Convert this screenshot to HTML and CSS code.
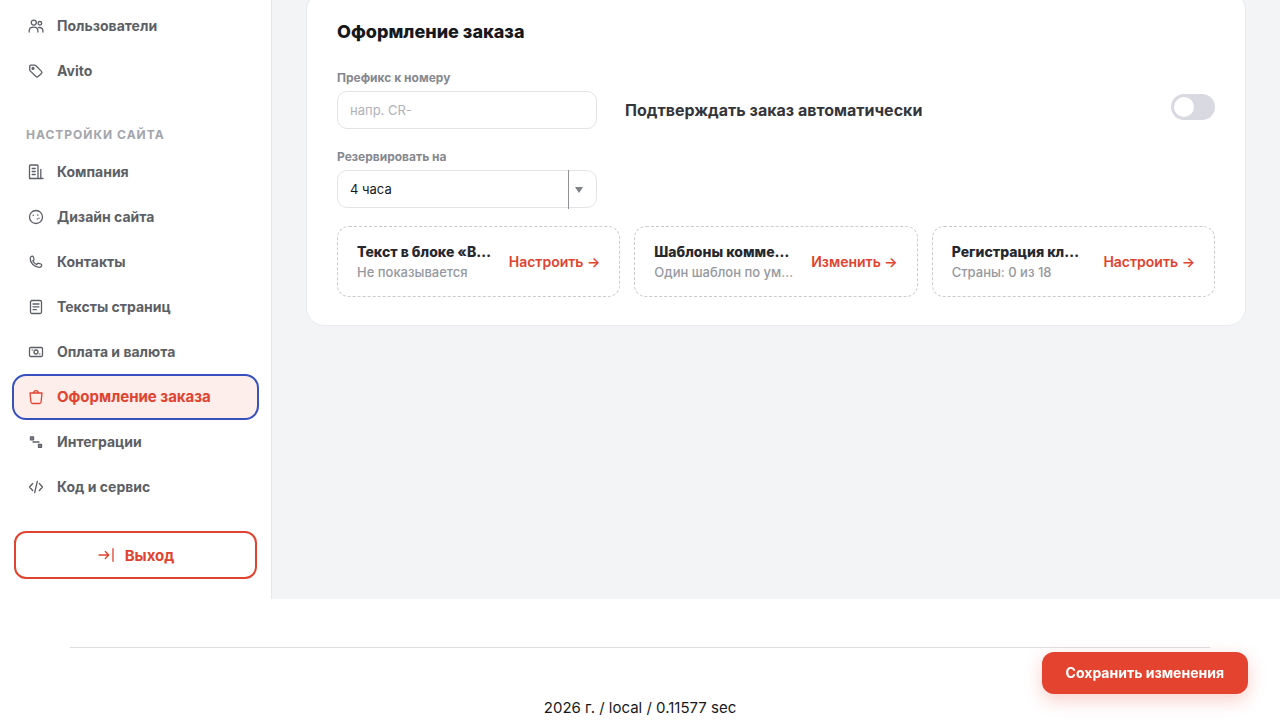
FILE: index.html
```html
<!DOCTYPE html>
<html lang="ru">
<head>
  <meta charset="UTF-8">
  <meta name="viewport" content="width=device-width, initial-scale=1">
  <title>Оформление заказа</title>
  <link rel="stylesheet" href="styles.css">
</head>
<body>
  <div class="layout">
    <aside class="sidebar">
      <nav class="menu">
        <a class="menu-item" href="#users">
          <svg class="icon" viewBox="0 0 18 18"><circle cx="6.8" cy="5.6" r="2.5"/><circle cx="12.9" cy="6.3" r="1.8"/><path d="M2.2 15v-1.2c0-2.2 1.9-3.6 4.4-3.6s4.3 1.4 4.3 3.6V15M11.6 10.6c2.4-.5 4.3.9 4.3 3V15"/></svg>
          Пользователи
        </a>
        <a class="menu-item" href="#avito">
          <svg class="icon" viewBox="0 0 18 18"><path d="M2.7 4.2v3.5c0 .5.2.9.5 1.2l5.8 5.6c.6.6 1.5.6 2.1 0l3.4-3.1c.6-.6.6-1.4 0-2L9 3.7c-.4-.3-.8-.5-1.3-.5h-4c-.6 0-1 .4-1 1z"/><circle cx="6" cy="6.4" r=".9"/></svg>
          Avito
        </a>
      </nav>

      <div class="menu-title">Настройки сайта</div>
      <nav class="menu">
        <a class="menu-item" href="#company">
          <svg class="icon" viewBox="0 0 18 18"><path d="M2.5 15.5V3c0-.6.4-1 1-1H10c.6 0 1 .4 1 1v12.5M2.5 15.5H16M13.8 6.5v9M5.2 5.5h3M5.2 8.5h3M5.2 11.5h3"/></svg>
          Компания
        </a>
        <a class="menu-item" href="#design">
          <svg class="icon" viewBox="0 0 18 18"><circle cx="9" cy="9" r="6.5"/><g class="dots"><circle cx="6.3" cy="7.2" r=".8"/><circle cx="10.7" cy="7" r=".8"/><circle cx="12" cy="10.2" r=".7"/><circle cx="10.3" cy="11" r=".7"/></g></svg>
          Дизайн сайта
        </a>
        <a class="menu-item" href="#contacts">
          <svg class="icon" viewBox="0 0 18 18"><path d="M3.2 5.2c.1-1 .8-1.9 1.8-2.1.6-.1 1.1.2 1.3.8l.7 2c.2.5 0 1-.4 1.3l-.8.6c.8 1.7 2.1 3 3.9 3.8l.7-.9c.3-.4.8-.5 1.3-.4l2.2.7c.6.2.9.7.8 1.3-.2 1.1-1.2 2-2.4 2C7.5 14.3 3 10 3.2 5.2z"/></svg>
          Контакты
        </a>
        <a class="menu-item" href="#texts">
          <svg class="icon" viewBox="0 0 18 18"><rect x="3.5" y="2.5" width="11" height="13" rx="1.5"/><path d="M6 6h6M6 8.8h6M6 11.6h3.5"/></svg>
          Тексты страниц
        </a>
        <a class="menu-item" href="#payment">
          <svg class="icon" viewBox="0 0 18 18"><rect x="2.5" y="4.5" width="13" height="9" rx="1.2"/><circle cx="9" cy="9" r="2"/><g class="dots"><circle cx="5.2" cy="7" r=".7"/><circle cx="12.8" cy="11" r=".7"/></g></svg>
          Оплата и валюта
        </a>
        <a class="menu-item active" href="#order">
          <svg class="icon" viewBox="0 0 18 18"><path d="M3 5h12l-.9 8.7c-.1 1.1-.8 1.8-1.8 1.8H5.7c-1 0-1.7-.7-1.8-1.8zM6.5 5C6.7 3.4 7.6 2.6 9 2.6s2.3.8 2.5 2.4"/></svg>
          Оформление заказа
        </a>
        <a class="menu-item" href="#integrations">
          <svg class="icon" viewBox="0 0 18 18"><rect class="node" x="3.5" y="3.8" width="3" height="3"/><rect class="node" x="11.5" y="11.3" width="3" height="3"/><path d="M6 9h6"/></svg>
          Интеграции
        </a>
        <a class="menu-item" href="#code">
          <svg class="icon" viewBox="0 0 18 18"><path d="M5.7 5.5L2.5 9l3.2 3.5M12.3 5.5L15.5 9l-3.2 3.5M10.3 3.5L7.7 14.5"/></svg>
          Код и сервис
        </a>
      </nav>

      <button class="logout" type="button">
        <svg class="icon" viewBox="0 0 18 18"><path d="M2 9h9.8M8.3 5.5L11.8 9l-3.5 3.5M16 2.7v12.6"/></svg>
        Выход
      </button>
    </aside>

    <main class="content">
      <section class="card">
        <h1>Оформление заказа</h1>

        <div class="row">
          <div class="field">
            <label for="prefix">Префикс к номеру</label>
            <input type="text" id="prefix" placeholder="напр. CR-">
          </div>
          <div class="switch-row">
            <label for="autoConfirm">Подтверждать заказ автоматически</label>
            <input class="switch" type="checkbox" id="autoConfirm">
          </div>
        </div>

        <div class="field">
          <label for="reserve">Резервировать на</label>
          <div class="select">
            <select id="reserve">
              <option>4 часа</option>
              <option>12 часов</option>
              <option>24 часа</option>
            </select>
          </div>
        </div>

        <div class="tiles">
          <div class="tile">
            <div class="tile-text">
              <div class="tile-title">Текст в блоке «Ваш заказ»</div>
              <div class="tile-note">Не показывается</div>
            </div>
            <a href="#text">Настроить →</a>
          </div>
          <div class="tile">
            <div class="tile-text">
              <div class="tile-title">Шаблоны комментариев</div>
              <div class="tile-note">Один шаблон по умолчанию</div>
            </div>
            <a href="#templates">Изменить →</a>
          </div>
          <div class="tile">
            <div class="tile-text">
              <div class="tile-title">Регистрация клиентов</div>
              <div class="tile-note">Страны: 0 из 18</div>
            </div>
            <a href="#registration">Настроить →</a>
          </div>
        </div>
      </section>
    </main>
  </div>

  <footer class="footer">2026 г. / local / 0.11577 sec</footer>

  <button class="save" type="submit">Сохранить изменения</button>
</body>
</html>
```

FILE: styles.css
```css
* {
  box-sizing: border-box;
}
body {
  margin: 0;
  font-family: Inter, "Liberation Sans", sans-serif;
  font-size: 16px;
  line-height: 24px;
  color: #17181c;
  background: #fff;
}
a {
  text-decoration: none;
}
input, select, button {
  font-family: inherit;
}
.layout {
  display: flex;
  background: #f3f4f6;
}

/* sidebar */
.sidebar {
  flex: 0 0 272px;
  padding: 5px 14px 20px;
  background: #fff;
  border-right: 1px solid #e6e7eb;
}
.menu {
  display: flex;
  flex-direction: column;
  gap: 3px;
}
.menu-item {
  display: flex;
  align-items: center;
  gap: 12px;
  height: 42px;
  padding: 0 13px;
  border-radius: 12px;
  font-size: 14px;
  font-weight: 700;
  color: #5c5f66;
}
.menu-item.active {
  font-size: 15px;
  color: #e0432f;
  background: #fdedeb;
  outline: 2px solid #3751be;
}
.menu-title {
  padding: 35px 12px 8px;
  font-size: 12px;
  line-height: 16px;
  font-weight: 700;
  letter-spacing: 1px;
  text-transform: uppercase;
  color: #a3a5ac;
}
.icon {
  flex: none;
  width: 18px;
  height: 18px;
  fill: none;
  stroke: currentColor;
  stroke-width: 1.3;
  stroke-linecap: round;
  stroke-linejoin: round;
}
.dots {
  fill: currentColor;
  stroke: none;
}
.node {
  fill: #8b8d92;
}
.logout {
  display: flex;
  align-items: center;
  justify-content: center;
  gap: 10px;
  width: 100%;
  height: 48px;
  margin-top: 23px;
  border: 2px solid #e0432f;
  border-radius: 12px;
  background: #fff;
  color: #e0432f;
  font-size: 15px;
  font-weight: 700;
  cursor: pointer;
}

/* content */
.content {
  flex: 1;
  min-width: 0;
  padding: 0 34px;
}
.card {
  margin-top: -8px;
  padding: 28px 30px;
  background: #fff;
  border: 1px solid #e9eaee;
  border-radius: 18px;
}
h1 {
  margin: 0 0 27px;
  font-size: 18px;
  line-height: 22px;
  font-weight: 800;
}
.row {
  display: flex;
  gap: 28px;
  margin-bottom: 20px;
}
.field {
  width: 260px;
}
.field label {
  display: block;
  margin-bottom: 6px;
  font-size: 12px;
  line-height: 15px;
  font-weight: 700;
  color: #85888f;
}
.field input, .field select {
  display: block;
  width: 100%;
  height: 38px;
  padding: 0 12px;
  border: 1px solid #e3e4e8;
  border-radius: 10px;
  background: #fff;
  font-size: 13px;
  color: #17181c;
}
.field input::placeholder {
  color: #b0b2b9;
}
.field select {
  appearance: none;
}
.select {
  position: relative;
}
.select::after {
  content: "";
  position: absolute;
  top: 0;
  right: 0;
  width: 28px;
  height: 39px;
  border-left: 1px solid #8f9195;
  pointer-events: none;
}
.select::before {
  content: "";
  position: absolute;
  top: 17px;
  right: 14px;
  border: 4px solid transparent;
  border-top: 6px solid #808286;
  border-bottom: 0;
  pointer-events: none;
}
.switch-row {
  flex: 1;
  display: flex;
  align-items: flex-end;
  justify-content: space-between;
  padding-bottom: 9px;
}
.switch-row label {
  line-height: 20px;
  font-weight: 700;
  color: #33353a;
}
.switch {
  appearance: none;
  width: 44px;
  height: 26px;
  margin: 0;
  padding: 3px;
  border-radius: 13px;
  background: #d9d9e1;
  cursor: pointer;
}
.switch::before {
  content: "";
  display: block;
  width: 20px;
  height: 20px;
  border-radius: 50%;
  background: #fff;
}
.switch:checked::before {
  margin-left: auto;
}
.tiles {
  display: grid;
  grid-template-columns: repeat(3, 1fr);
  gap: 14px;
  margin-top: 18px;
}
.tile {
  display: flex;
  align-items: center;
  justify-content: space-between;
  gap: 17px;
  min-width: 0;
  padding: 14px 19px;
  border: 1px dashed #c9cbd0;
  border-radius: 12px;
}
.tile-text {
  min-width: 0;
}
.tile-title, .tile-note {
  overflow: hidden;
  text-overflow: ellipsis;
  white-space: nowrap;
}
.tile-title {
  font-size: 14px;
  line-height: 22px;
  font-weight: 800;
  color: #26282d;
}
.tile-note {
  font-size: 13px;
  line-height: 19px;
  font-weight: 500;
  color: #96989f;
}
.tile a {
  flex: none;
  font-size: 14px;
  font-weight: 600;
  color: #e0432f;
}

/* footer */
.footer {
  max-width: 1140px;
  margin: 48px auto 0;
  padding-top: 48px;
  border-top: 1px solid #dfe0e3;
  font-size: 15px;
  text-align: center;
}
.save {
  position: fixed;
  right: 32px;
  bottom: 26px;
  height: 42px;
  padding: 0 24px 1px;
  border: 0;
  border-radius: 12px;
  background: #e4442f;
  box-shadow: 0 6px 18px rgba(228, 68, 47, 0.25);
  color: #fff;
  font-size: 14px;
  font-weight: 700;
  cursor: pointer;
}
```
